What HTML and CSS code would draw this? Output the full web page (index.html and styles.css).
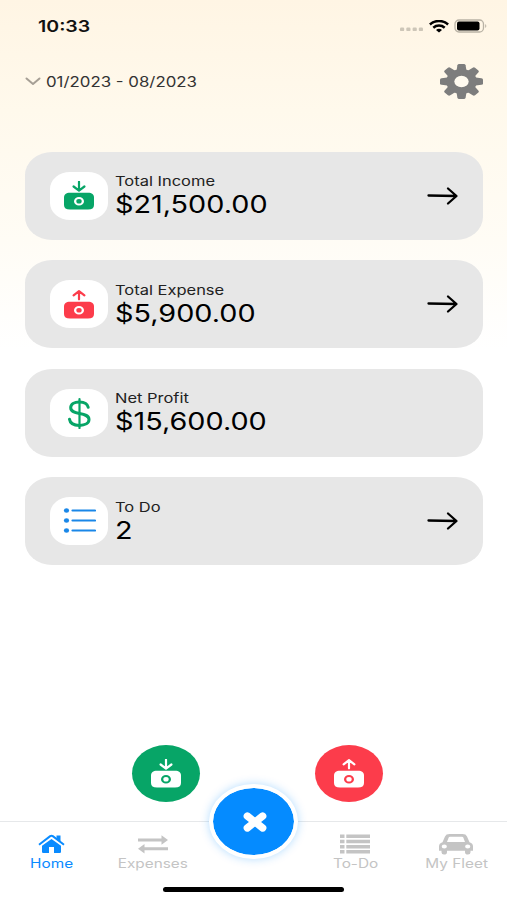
FILE: index.html
```html
<!DOCTYPE html>
<html lang="en">
<head>
    <meta charset="UTF-8">
    <meta name="viewport" content="width=device-width, initial-scale=1.0">
    <title>Home</title>
    <link rel="stylesheet" href="styles.css">
</head>
<body>
    <!-- Shared icons -->
    <svg class="sprite">
        <symbol id="money-in" viewBox="0 0 30 29" preserveAspectRatio="none">
            <path d="M15 .8V9M9.6 5.5L15 9.6l5.4-4.1" fill="none" stroke="currentColor" stroke-width="2.2" stroke-linecap="round" stroke-linejoin="round"/>
            <path fill="currentColor" fill-rule="evenodd" d="M6 11.800H24C28 11.800 30 13.500 30 16.500V24C30 27 28 28.600 24 28.600H6C2 28.600 0 27 0 24V16.500C0 13.500 2 11.800 6 11.800ZM10 20.200a5 4.300 0 1 0 10 0a5 4.300 0 1 0-10 0ZM12.300 20.200a2.700 2.300 0 1 0 5.400 0a2.700 2.300 0 1 0-5.400 0Z"/>
        </symbol>
        <symbol id="money-out" viewBox="0 0 30 29" preserveAspectRatio="none">
            <path d="M15 9.300V1.400M9.600 5.400L15 1.200l5.400 4.200" fill="none" stroke="currentColor" stroke-width="2.2" stroke-linecap="round" stroke-linejoin="round"/>
            <path fill="currentColor" fill-rule="evenodd" d="M6 11.800H24C28 11.800 30 13.500 30 16.500V24C30 27 28 28.600 24 28.600H6C2 28.600 0 27 0 24V16.500C0 13.500 2 11.800 6 11.800ZM10 20.200a5 4.300 0 1 0 10 0a5 4.300 0 1 0-10 0ZM12.300 20.200a2.700 2.300 0 1 0 5.400 0a2.700 2.300 0 1 0-5.400 0Z"/>
        </symbol>
        <symbol id="arrow" viewBox="0 0 32 20">
            <path d="M1.500 9.500L29 10M21 2.500L29.500 10L21 17.500" fill="none" stroke="#000" stroke-width="2.300" stroke-linecap="round" stroke-linejoin="round"/>
        </symbol>
    </svg>

    <!-- Status bar -->
    <div class="status-bar">
        <span class="time"><span class="wide">10:33</span></span>
        <div class="status-icons">
            <svg width="24" height="5" viewBox="0 0 24 5" fill="#cdc6b8">
                <rect x="0" y="0.500" width="4.200" height="3.600" rx="1.200"/>
                <rect x="6.300" y="0.500" width="4.200" height="3.600" rx="1.200"/>
                <rect x="12.600" y="0.500" width="4.200" height="3.600" rx="1.200"/>
                <rect x="18.800" y="0.500" width="4.200" height="3.600" rx="1.200"/>
            </svg>
            <svg class="wifi" width="20" height="13" viewBox="0 0 20 13" fill="none" stroke="#000" stroke-width="2.500">
                <path d="M.9 4.500C6 -.2 14 -.2 19.100 4.500"/>
                <path d="M4.300 7.700C7.500 4.900 12.500 4.900 15.700 7.700"/>
                <path d="M7 9.900C8.700 8.500 11.300 8.500 13 9.900L10 12.400Z" fill="#000" stroke="none"/>
            </svg>
            <svg width="34" height="14" viewBox="0 0 34 14">
                <rect x="1" y="1" width="28.500" height="12" rx="4" fill="none" stroke="#b9b2a5" stroke-width="1.300"/>
                <rect x="3" y="2.600" width="22.500" height="8.800" rx="2" fill="#000"/>
                <path d="M31.200 5Q33.500 7 31.200 9Z" fill="#b9b2a5"/>
            </svg>
        </div>
    </div>

    <!-- Period filter and settings -->
    <header class="header">
        <div class="period">
            <svg width="16" height="9" viewBox="0 0 16 9"><path d="M1.500 1.500L8 7L14.500 1.500" fill="none" stroke="#a69f95" stroke-width="2" stroke-linecap="round" stroke-linejoin="round"/></svg>
            <span class="wide">01/2023 - 08/2023</span>
        </div>
        <svg class="gear" width="43" height="35" viewBox="0 0 42 42" preserveAspectRatio="none">
            <g fill="#7d7d7d">
                <path id="teeth" d="M16 9L17 1.500Q17.300 0 18.700 0H23.300Q24.700 0 25 1.500L26 9V33L25 40.500Q24.700 42 23.300 42H18.700Q17.300 42 17 40.500L16 33Z"/>
                <use href="#teeth" transform="rotate(45 21 21)"/>
                <use href="#teeth" transform="rotate(90 21 21)"/>
                <use href="#teeth" transform="rotate(135 21 21)"/>
                <circle cx="21" cy="21" r="15"/>
            </g>
            <circle cx="21" cy="21" r="7" fill="#fffaef"/>
        </svg>
    </header>

    <!-- Summary cards -->
    <main class="cards">
        <section class="card">
            <div class="card-icon green"><svg width="30" height="29"><use href="#money-in"/></svg></div>
            <div class="card-text">
                <p class="label wide">Total Income</p>
                <p class="value wide">$21,500.00</p>
            </div>
            <svg class="arrow" width="32" height="20"><use href="#arrow"/></svg>
        </section>
        <section class="card">
            <div class="card-icon red"><svg width="30" height="29"><use href="#money-out"/></svg></div>
            <div class="card-text">
                <p class="label wide">Total Expense</p>
                <p class="value wide">$5,900.00</p>
            </div>
            <svg class="arrow" width="32" height="20"><use href="#arrow"/></svg>
        </section>
        <section class="card">
            <div class="card-icon green">
                <svg width="24" height="32" viewBox="0 0 24 32" fill="none" stroke="currentColor" stroke-width="3" stroke-linecap="round">
                    <path d="M21.200 10.300C20.500 7 17 4.900 12.500 4.900C7.200 4.900 3.700 7.200 3.700 10.700C3.700 14.500 7.500 15.500 12.500 16.400C18 17.400 22 18.500 22 22.500C22 26.200 18 28.400 12.500 28.400C6.800 28.400 3 26 2.500 22.300"/>
                    <path d="M12.500 2V31" stroke-width="2.200"/>
                </svg>
            </div>
            <div class="card-text">
                <p class="label wide">Net Profit</p>
                <p class="value wide">$15,600.00</p>
            </div>
        </section>
        <section class="card">
            <div class="card-icon blue">
                <svg width="33" height="26" viewBox="0 0 33 26" fill="currentColor">
                    <ellipse cx="3.500" cy="2.500" rx="2.600" ry="2.200"/>
                    <ellipse cx="3.500" cy="12.500" rx="2.600" ry="2.200"/>
                    <ellipse cx="3.500" cy="22.500" rx="2.600" ry="2.200"/>
                    <path d="M9.500 2.500H32M9.500 12.500H32M9.500 22.500H32" stroke="currentColor" stroke-width="2.200" stroke-linecap="round"/>
                </svg>
            </div>
            <div class="card-text">
                <p class="label wide">To Do</p>
                <p class="value wide">2</p>
            </div>
            <svg class="arrow" width="32" height="20"><use href="#arrow"/></svg>
        </section>
    </main>

    <!-- Quick actions -->
    <div class="actions">
        <button class="action action-in"><svg width="30" height="29"><use href="#money-in"/></svg></button>
        <button class="action action-out"><svg width="30" height="29"><use href="#money-out"/></svg></button>
    </div>

    <!-- Bottom navigation -->
    <nav class="tab-bar">
        <a class="tab active">
            <svg width="27" height="19" viewBox="0 0 27 19" fill="currentColor">
                <path d="M13.500 4.500L23 11.300V17.500Q23 18.500 21.800 18.500H16V12.500H11V18.500H5.200Q4 18.500 4 17.500V11.300Z"/>
                <path d="M1 10.200L12.200 1.600Q13.500.700 14.800 1.600L26 10.200" fill="none" stroke="currentColor" stroke-width="2"/>
                <path d="M18.500 1H22.500V7.500L18.500 4.300Z"/>
            </svg>
            <span class="wide">Home</span>
        </a>
        <a class="tab">
            <svg width="30" height="19" viewBox="0 0 30 19" fill="currentColor">
                <path d="M0 4H23.500V.8L30 5.500L23.500 10.200V7H0Z"/>
                <path d="M30 12.700H6.500V9.500L0 14.200L6.500 18.900V15.700H30Z"/>
            </svg>
            <span class="wide">Expenses</span>
        </a>
        <div class="tab">
            <button class="close">
                <svg width="26" height="22" viewBox="0 0 26 22"><path d="M5.300 5L20.700 17M20.700 5L5.300 17" stroke="#fff" stroke-width="7.300" stroke-linecap="round"/></svg>
            </button>
        </div>
        <a class="tab">
            <svg width="30" height="19" viewBox="0 0 30 19" fill="currentColor">
                <path d="M0 0H4.500V3.500H0ZM0 5.200H4.500V8.700H0ZM0 10.400H4.500V13.900H0ZM0 15.600H4.500V19H0Z"/>
                <path d="M6.300 0H30V3.500H6.300ZM6.300 5.200H30V8.700H6.300ZM6.300 10.400H30V13.900H6.300ZM6.300 15.600H30V19H6.300Z"/>
            </svg>
            <span class="wide">To-Do</span>
        </a>
        <a class="tab">
            <svg class="car" width="34" height="22" viewBox="0 0 34 22" preserveAspectRatio="none" fill="currentColor">
                <path fill-rule="evenodd" d="M3.500 8.700L6 2.500Q7 0 10.500 0H23.500Q27 0 28 2.500L30.500 8.700Q34 9.800 34 13V17.500H31.500V19Q31.500 21.500 29 21.500Q26 21.500 26 19V17.500H8V19Q8 21.500 5 21.500Q2.500 21.500 2.500 19V17.500H0V13Q0 9.800 3.500 8.700ZM8 8.500H26L24.300 3.600Q24 2.900 23 2.900H11Q10 2.900 9.700 3.600ZM2.700 13a2.600 2.100 0 1 0 5.200 0a2.600 2.100 0 1 0-5.200 0ZM26.100 13a2.600 2.100 0 1 0 5.200 0a2.600 2.100 0 1 0-5.200 0Z"/>
            </svg>
            <span class="wide">My Fleet</span>
        </a>
    </nav>
    <div class="home-indicator"></div>
</body>
</html>
```
FILE: styles.css
```css
* {
    box-sizing: border-box;
}

body {
    display: flex;
    flex-direction: column;
    height: 900px;
    margin: 0;
    overflow: hidden;
    font-family: Inter, "Liberation Sans", sans-serif;
    color: #111;
    background: linear-gradient(#fff5e4 0, #fff9ec 110px, #fffcf5 240px, #fff 350px);
}

svg {
    display: block;
    flex: none;
}

.sprite {
    position: absolute;
    width: 0;
    height: 0;
}

/* Extended letterforms used for all the text */
.wide {
    display: block;
    width: fit-content;
    white-space: nowrap;
    transform: scaleX(1.22);
    transform-origin: left center;
}

/* Status bar */
.status-bar {
    display: flex;
    justify-content: space-between;
    align-items: center;
    height: 52px;
    padding: 0 19px 0 38px;
}

.time {
    font-size: 16px;
    font-weight: 600;
}

.status-icons {
    display: flex;
    align-items: center;
    gap: 5px;
}

.status-icons svg:first-child {
    margin-top: 7px;
}

/* Header */
.header {
    display: flex;
    justify-content: space-between;
    align-items: center;
    height: 59px;
    padding: 0 24px 0 25px;
}

.period {
    display: flex;
    align-items: center;
    gap: 5px;
    font-size: 13.8px;
    color: #333;
}

/* Cards */
.cards {
    display: flex;
    flex-direction: column;
    gap: 20.5px;
    padding: 40.5px 24px 0 25px;
}

.card {
    display: flex;
    align-items: center;
    height: 88px;
    padding: 0 24px 0 25px;
    background: #e7e7e7;
    border-radius: 27px / 23px;
}

.card-icon {
    display: flex;
    justify-content: center;
    align-items: center;
    width: 58px;
    height: 48px;
    margin-right: 7px;
    background: #fff;
    border-radius: 20px / 17px;
}

.green {
    color: #07a567;
}

.red {
    color: #fc3c4b;
}

.blue {
    color: #1a87e8;
}

.card-text {
    flex: 1;
    padding-top: 1px;
}

.card-text p {
    margin: 0;
}

.label {
    font-size: 13.5px;
    line-height: 17px;
    color: #222;
}

.value {
    font-size: 23.6px;
    line-height: 29px;
    color: #000;
}

/* Quick actions */
.actions {
    display: flex;
    justify-content: center;
    gap: 115px;
    margin-top: auto;
    padding-left: 8px;
}

.action {
    display: flex;
    justify-content: center;
    align-items: center;
    width: 68px;
    height: 57px;
    padding: 0;
    border: none;
    border-radius: 50%;
    color: #fff;
}

.action-in {
    background: #07a567;
}

.action-out {
    background: #fc3c4b;
}

/* Bottom navigation */
.tab-bar {
    display: grid;
    grid-template-columns: repeat(5, 1fr);
    height: 66px;
    margin-top: 19px;
    padding-left: 1px;
    border-top: 1px solid #e6e8ea;
}

.tab {
    display: flex;
    flex-direction: column;
    align-items: center;
    padding-top: 12px;
    font-size: 12.6px;
    line-height: 16px;
    color: #c4c4c4;
}

.tab svg {
    height: 20px;
    margin-bottom: 2px;
}

.tab .car {
    height: 21px;
    margin-bottom: 1px;
}

.tab .wide {
    transform-origin: center;
}

.active {
    color: #0a8bff;
}

.close {
    display: flex;
    justify-content: center;
    align-items: center;
    width: 89px;
    height: 75px;
    margin-top: -50px;
    padding: 0;
    border: 4px solid #fff;
    border-radius: 50%;
    background: #058bff;
    background-clip: padding-box;
    box-shadow: 0 0 10px rgba(5, 139, 255, 0.3);
}

.tab .close svg {
    height: 22px;
    margin: 0 0 0 2px;
}

.home-indicator {
    width: 181px;
    height: 5px;
    margin: 0 auto 8px;
    border-radius: 3px;
    background: #000;
}
```
